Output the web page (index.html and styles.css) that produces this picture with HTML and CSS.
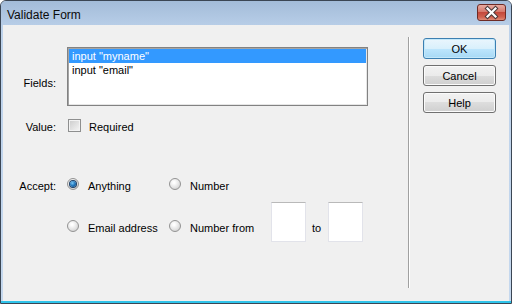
FILE: index.html
```html
<!DOCTYPE html>
<html lang="en">

<head>
    <meta charset="UTF-8">
    <meta name="viewport" content="width=device-width, initial-scale=1.0">
    <title>Validate Form</title>
    <link rel="stylesheet" href="styles.css">
</head>

<body>
    <div class="window">
        <div class="titlebar">
            <span class="title">Validate Form</span>
            <button class="close-btn" aria-label="Close">
                <svg width="27" height="15" viewBox="0 0 27 15">
                    <path d="M9.5 3.5 L17.5 11.5 M17.5 3.5 L9.5 11.5" stroke="#4a3a3a" stroke-width="4.2" stroke-linecap="square" fill="none" />
                    <path d="M9.5 3.5 L17.5 11.5 M17.5 3.5 L9.5 11.5" stroke="#ffffff" stroke-width="2.2" stroke-linecap="square" fill="none" />
                </svg>
            </button>
        </div>

        <div class="client">
            <div class="form">
                <div class="row row-fields">
                    <span class="label label-fields">Fields:</span>
                    <div class="listbox">
                        <div class="item selected">input "myname"</div>
                        <div class="item">input "email"</div>
                    </div>
                </div>

                <div class="row row-value">
                    <span class="label">Value:</span>
                    <span class="check"></span>
                    <span class="text">Required</span>
                </div>

                <div class="row row-accept">
                    <span class="label">Accept:</span>
                    <div class="options">
                        <div class="option"><span class="radio checked"></span><span class="text">Anything</span></div>
                        <div class="option"><span class="radio"></span><span class="text">Number</span></div>
                        <div class="option"><span class="radio"></span><span class="text">Email address</span></div>
                        <div class="option">
                            <span class="radio"></span>
                            <span class="text from-text">Number from</span>
                            <span class="textbox"></span>
                            <span class="text to-text">to</span>
                            <span class="textbox"></span>
                        </div>
                    </div>
                </div>
            </div>

            <div class="divider"></div>

            <div class="buttons">
                <button class="btn btn-default">OK</button>
                <button class="btn">Cancel</button>
                <button class="btn">Help</button>
            </div>
        </div>
    </div>
</body>

</html>
```

FILE: styles.css
```css
html,
body {
    margin: 0;
    padding: 0;
    background: #ffffff;
}

body {
    font-family: "Liberation Sans", Arial, sans-serif;
    font-size: 11px;
    color: #000;
}

.window {
    box-sizing: border-box;
    width: 512px;
    height: 304px;
    border: 1px solid #3b4654;
    border-radius: 6px 6px 0 0;
    background: linear-gradient(to bottom, #bcd1ea 0%, #c5d8ee calc(100% - 2px), #2fc4ea calc(100% - 2px));
    display: flex;
    flex-direction: column;
    overflow: hidden;
}

/* title bar */
.titlebar {
    height: 24px;
    flex: none;
    display: flex;
    justify-content: space-between;
    align-items: flex-start;
    padding: 0 5px 0 6px;
    background: linear-gradient(to bottom, #a3bcd9, #b7cde7);
}

.title {
    font-size: 12px;
    line-height: 14px;
    margin-top: 7px;
    color: #0b0b0b;
}

.close-btn {
    margin-top: 3px;
    width: 29px;
    height: 17px;
    padding: 0;
    border: 1px solid #6e2b25;
    border-radius: 3px;
    background: linear-gradient(to bottom, #e7aca2 0%, #d6786b 45%, #c4493c 50%, #d0614f 80%, #e08c78 100%);
    display: flex;
    align-items: center;
    justify-content: center;
}

/* client area */
.client {
    flex: 1;
    margin: 0 2px 2px 2px;
    background: #f0f0f0;
    display: flex;
}

.form {
    width: 405px;
    padding-top: 22px;
    box-sizing: border-box;
}

.row {
    display: flex;
    align-items: center;
}

.label {
    width: 53px;
    margin-right: 11px;
    text-align: right;
    line-height: 13px;
    flex: none;
}

.text {
    line-height: 13px;
    padding-top: 5px;
}

.label-fields {
    padding-top: 13px;
}

.listbox {
    box-sizing: border-box;
    width: 301px;
    height: 59px;
    border: 1px solid #828282;
    box-shadow: inset 1px 1px 0 #a5a5a5, inset -1px -1px 0 #e6e6e6;
    background: #ffffff;
    padding: 1px;
}

.item {
    height: 14px;
    line-height: 14px;
    padding-left: 3px;
    white-space: nowrap;
}

.item.selected {
    background: #3399ff;
    color: #ffffff;
}

.row-value {
    margin-top: 10px;
}

.row-value .label {
    padding-top: 5px;
}

.check {
    box-sizing: border-box;
    width: 13px;
    height: 13px;
    margin-left: 1px;
    margin-right: 8px;
    border: 1px solid #8e8f8f;
    background: linear-gradient(135deg, #cbcbcb, #f6f6f6);
    box-shadow: inset 0 0 0 1px #f3f3f3;
    flex: none;
}

.row-accept {
    margin-top: 41px;
    align-items: flex-start;
}

.row-accept .label {
    padding-top: 5px;
}

.options {
    display: grid;
    grid-template-columns: 102px auto;
    row-gap: 9px;
    align-items: center;
}

.option {
    display: flex;
    align-items: center;
    white-space: nowrap;
}

.radio {
    box-sizing: border-box;
    width: 12px;
    height: 12px;
    margin-right: 9px;
    border: 1px solid #939393;
    border-radius: 50%;
    background: radial-gradient(circle at 40% 35%, #ffffff 10%, #e4e4e4 55%, #c4c4c4 100%);
    display: flex;
    align-items: center;
    justify-content: center;
    flex: none;
}

.radio.checked::after {
    content: "";
    width: 6px;
    height: 6px;
    border-radius: 50%;
    background: radial-gradient(circle at 40% 35%, #7cc8f5 0%, #1f74ba 50%, #0e4279 100%);
    box-shadow: 0 0 0 1px #1d3f66;
}

.from-text {
    width: 81px;
    flex: none;
}

.textbox {
    box-sizing: border-box;
    width: 35px;
    height: 40px;
    margin-bottom: 7px;
    background: #ffffff;
    border: 1px solid #e2e3ea;
    border-top-color: #b9b9b9;
    flex: none;
}

.to-text {
    margin: 0 7px 0 6px;
}

/* separator and buttons */
.divider {
    width: 1px;
    height: 251px;
    margin-top: 12px;
    background: #a0a0a0;
    border-right: 1px solid #ffffff;
}

.buttons {
    margin-left: 13px;
    padding-top: 13px;
    display: flex;
    flex-direction: column;
    gap: 6px;
}

.btn {
    box-sizing: border-box;
    width: 73px;
    height: 21px;
    padding: 0;
    font-family: "Liberation Sans", Arial, sans-serif;
    font-size: 11px;
    color: #000;
    border: 1px solid #707070;
    border-radius: 3px;
    background: linear-gradient(to bottom, #f2f2f2 0%, #ebebeb 50%, #dddddd 50%, #cfcfcf 100%);
    box-shadow: inset 0 0 0 1px #fbfbfb;
}

.btn-default {
    border-color: #3c7fb1;
    background: linear-gradient(to bottom, #eaf6fd 0%, #d9f0fc 50%, #bee6fd 50%, #a7d9f5 100%);
    box-shadow: inset 0 0 0 1px #c4e8fa;
}
```
